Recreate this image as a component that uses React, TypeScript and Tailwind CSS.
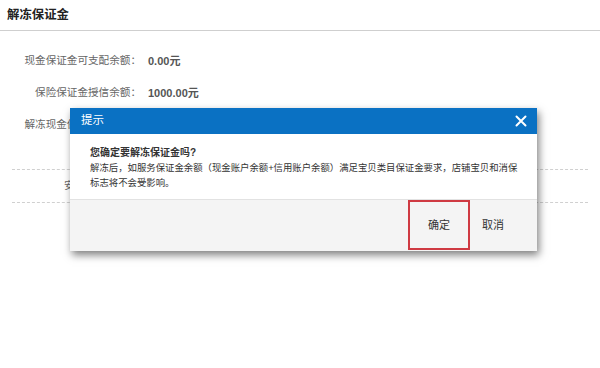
import React from 'react';

const font = { fontFamily: '"Liberation Sans", "Noto Sans CJK SC", sans-serif' };

function InfoRow({ label, value }: { label: string; value: string }) {
  return (
    <div className="flex items-center h-[32px]">
      <span className="w-[141px] text-right text-[10.6px] text-[#666]">{label}</span>
      <span className="ml-[7px] text-[11px] font-bold text-[#555]">{value}</span>
    </div>
  );
}

export default function App() {
  return (
    <div className="relative w-[600px] h-[368px] bg-white overflow-hidden" style={font}>
      <div className="h-[31px] border-b border-[#cfcfcf] flex items-center pl-[7px]">
        <h1 className="text-[12.4px] font-bold text-[#222]">解冻保证金</h1>
      </div>

      <div className="pt-[14px]">
        <InfoRow label="现金保证金可支配余额：" value="0.00元" />
        <InfoRow label="保险保证金授信余额：" value="1000.00元" />
        <InfoRow label="解冻现金保证金可用额：" value="" />
      </div>

      <div className="mx-[12px] mt-[28px] border-t border-dashed border-[#d0d0d0]" />
      <div className="h-[32px] flex items-center pl-[64px] text-[10.5px] text-[#666]">
        安全提示
      </div>
      <div className="mx-[12px] border-t border-dashed border-[#d0d0d0]" />

      {/* dialog */}
      <div className="absolute left-[70px] top-[108px] w-[467px] bg-white shadow-[2px_4px_8px_rgba(0,0,0,0.5)]">
        <div className="h-[26px] bg-[#0a71c3] flex items-center justify-between pl-[11px] pr-[10px]">
          <span className="text-[11.5px] text-white">提示</span>
          <svg width="12" height="12" viewBox="0 0 12 12">
            <path d="M1.5 1.5 L10.5 10.5 M10.5 1.5 L1.5 10.5" stroke="white" strokeWidth="2" strokeLinecap="round" />
          </svg>
        </div>
        <div className="pl-[20px] pr-[12px] pt-[11px] pb-[9px] text-[9.4px] leading-[15px] text-[#333]">
          <p className="font-bold text-[10px]">您确定要解冻保证金吗?</p>
          <p>解冻后，如服务保证金余额（现金账户余额+信用账户余额）满足宝贝类目保证金要求，店铺宝贝和消保</p>
          <p>标志将不会受影响。</p>
        </div>
        <div className="h-[52px] bg-[#f4f4f4] border-t border-[#e2e2e2] flex justify-end items-start pr-[33px]">
          <button className="w-[62px] h-[50px] border-2 border-[#cf3a42] text-[11px] text-[#333] flex items-center justify-center">
            确定
          </button>
          <button className="ml-[12px] h-[50px] text-[11px] text-[#333] flex items-center">
            取消
          </button>
        </div>
      </div>
    </div>
  );
}
